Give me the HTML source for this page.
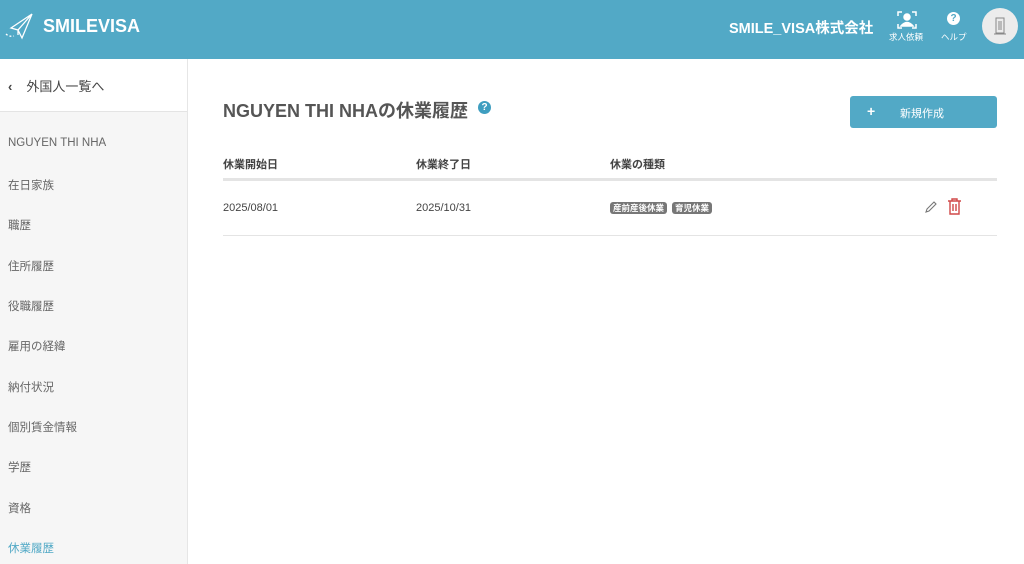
<!DOCTYPE html>
<html><head><meta charset="utf-8"><style>
*{margin:0;padding:0;box-sizing:border-box}
body{width:1024px;height:564px;overflow:hidden;font-family:"Liberation Sans","Noto Sans CJK JP",sans-serif;background:#fff;color:#444;position:relative}
.hdr{position:absolute;left:0;top:0;width:1024px;height:59px;background:#52a9c6}
.abs{position:absolute}
.side{position:absolute;left:0;top:59px;width:188px;height:505px;background:#f6f6f6;border-right:1px solid #e6e6e6}
.back{height:53px;background:#fff;border-bottom:1px solid #e4e4e4;font-size:13px;color:#444;padding:17px 0 0 8px}
.item{position:absolute;left:8px;font-size:11.5px;color:#666}
.th{position:absolute;top:156px;font-size:11px;font-weight:bold;color:#444}
.td{position:absolute;top:202px;font-size:11px;color:#444}
.tag{display:inline-block;background:#777;color:#fff;font-size:8.5px;font-weight:bold;border-radius:3px;padding:1px 3px;line-height:10px}
</style></head><body>
<div class="hdr">
 <svg class="abs" style="left:5px;top:12px" width="30" height="28" viewBox="0 0 30 28" fill="none" stroke="#fff" stroke-width="1.3"><path d="M27 2 L6 16 L13 18 Z M27 2 L13 18 L17 26 Z M13 18 L13 23"/><path d="M1 22 Q4 25 9 24" stroke-dasharray="2 2"/></svg>
 <div class="abs" style="left:43px;top:16px;color:#fff;font-size:18px;font-weight:bold">SMILEVISA</div>
 <div class="abs" style="left:729px;top:17px;color:#fff;font-size:14.5px;font-weight:bold">SMILE_VISA株式会社</div>
 <svg class="abs" style="left:897px;top:11px" width="20" height="18" viewBox="0 0 20 18" fill="none" stroke="#fff" stroke-width="1.5"><path d="M1 5V1h4M15 1h4v4M1 13v4h4M15 17h4v-4"/><circle cx="10" cy="6" r="3" fill="#fff"/><path d="M4 15q6-7 12 0z" fill="#fff"/></svg>
 <div class="abs" style="left:889px;top:31px;color:#fff;font-size:8.5px">求人依頼</div>
 <div class="abs" style="left:947px;top:12px;width:13px;height:13px;border-radius:50%;background:#fff;color:#52a9c6;font-size:10px;font-weight:bold;text-align:center;line-height:13px">?</div>
 <div class="abs" style="left:941px;top:31px;color:#fff;font-size:8.5px">ヘルプ</div>
 <div class="abs" style="left:982px;top:8px;width:36px;height:36px;border-radius:50%;background:#ececec"></div>
 <svg class="abs" style="left:993px;top:17px" width="14" height="18" viewBox="0 0 14 18" fill="none" stroke="#888" stroke-width="1"><rect x="3" y="1" width="8" height="15"/><path d="M6 4v9M8 4v9M1 17h12"/></svg>
</div>
<div class="side">
 <div class="back"><span style="font-weight:bold;margin-right:14px">&lsaquo;</span>外国人一覧へ</div>
 <div class="item" style="top:78px">NGUYEN THI NHA</div>
 <div class="item" style="top:118px">在日家族</div>
 <div class="item" style="top:158px">職歴</div>
 <div class="item" style="top:199px">住所履歴</div>
 <div class="item" style="top:239px">役職履歴</div>
 <div class="item" style="top:279px">雇用の経緯</div>
 <div class="item" style="top:320px">納付状況</div>
 <div class="item" style="top:360px">個別賃金情報</div>
 <div class="item" style="top:400px">学歴</div>
 <div class="item" style="top:441px">資格</div>
 <div class="item" style="top:481px;color:#52a9c6">休業履歴</div>
</div>
<div class="abs" style="left:223px;top:97px;font-size:18px;font-weight:bold;color:#555">NGUYEN THI NHAの休業履歴</div>
<div class="abs" style="left:478px;top:101px;width:13px;height:13px;border-radius:50%;background:#3f9ec0;color:#fff;font-size:10px;font-weight:bold;text-align:center;line-height:13px">?</div>
<div class="abs" style="left:850px;top:96px;width:147px;height:32px;background:#52a9c6;border-radius:3px;color:#fff;font-size:11px">
 <span class="abs" style="left:17px;top:7px;font-size:14px;font-weight:bold">+</span><span class="abs" style="left:50px;top:9px">新規作成</span></div>
<div class="th" style="left:223px">休業開始日</div>
<div class="th" style="left:416px">休業終了日</div>
<div class="th" style="left:610px">休業の種類</div>
<div class="abs" style="left:223px;top:178px;width:774px;height:3px;background:#e4e4e4"></div>
<div class="td" style="left:223px">2025/08/01</div>
<div class="td" style="left:416px">2025/10/31</div>
<div class="abs" style="left:610px;top:202px;font-size:0"><span class="tag">産前産後休業</span><span class="tag" style="margin-left:5px">育児休業</span></div>
<svg class="abs" style="left:924px;top:200px" width="14" height="14" viewBox="0 0 14 14" fill="none" stroke="#777" stroke-width="1.1"><path d="M2 12l1-3 7-7 2 2-7 7z"/></svg>
<svg class="abs" style="left:947px;top:198px" width="15" height="17" viewBox="0 0 15 17" fill="none" stroke="#d04848" stroke-width="1.4"><path d="M1 3h13M5 3V1h5v2M3 3v13h9V3M6 6v7M9 6v7"/></svg>
<div class="abs" style="left:223px;top:235px;width:774px;height:1px;background:#e4e4e4"></div>
</body></html>
